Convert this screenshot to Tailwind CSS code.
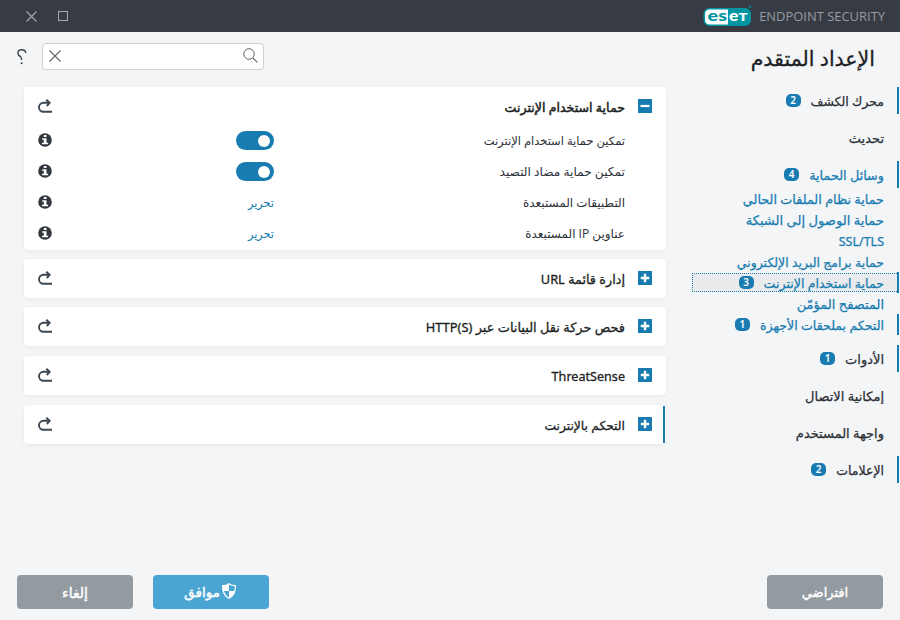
<!DOCTYPE html>
<html lang="ar" dir="rtl">
<head>
    <meta charset="UTF-8">
    <title>ESET Endpoint Security</title>
    <script src="https://cdn.jsdelivr.net/npm/@tailwindcss/browser@4"></script>
</head>
<body class="w-[900px] h-[620px] overflow-hidden bg-[#f4f5f7] text-[13px] text-[#2b2f36] font-['Noto_Sans','Open_Sans','DejaVu_Sans',sans-serif] flex flex-col whitespace-nowrap">

    <svg class="hidden">
        <symbol id="reset" viewBox="0 0 14 14">
            <path d="M14 12.800H5.500A4.500 4.500 0 0 1 5.500 3.800H10.500" fill="none" stroke="#3b4752" stroke-width="1.900"/>
            <path d="M8.300 .8L11.600 3.800L8.800 7" fill="none" stroke="#3b4752" stroke-width="2"/>
        </symbol>
        <symbol id="info" viewBox="0 0 14 14">
            <circle cx="7" cy="7" r="6.800" fill="#33383f"/>
            <path d="M5.800 2h2.700v2H5.800zM4.200 5.200h4.300v4.500h1.600v1.600H4V9.700h1.800V6.800H4.200z" fill="#fff"/>
        </symbol>
        <symbol id="plus" viewBox="0 0 14 14">
            <path d="M0 0h14v14H0z" fill="#187cb0"/>
            <path d="M2.800 7h8.400M7 2.800v8.400" stroke="#fff" stroke-width="2.400"/>
        </symbol>
        <symbol id="minus" viewBox="0 0 14 14">
            <path d="M0 0h14v14H0z" fill="#187cb0"/>
            <path d="M2.500 7h9" stroke="#fff" stroke-width="2.200"/>
        </symbol>
    </svg>

    <!-- Title bar -->
    <header class="h-8 shrink-0 bg-[#373b43] flex items-center justify-between pr-[15px] pl-[26px]" dir="ltr">
        <div class="flex items-center gap-[21px]">
            <svg class="w-[11px] h-[11px]" viewBox="0 0 11 11"><path d="M.5 .5l10 10M10.500 .5l-10 10" stroke="#aaa9a6" stroke-width="1.100"/></svg>
            <div class="w-[10px] h-[10px] border border-[#aaa9a6]"></div>
        </div>
        <div class="flex items-center gap-[7px]">
            <svg class="w-[49px] h-[22px]" viewBox="0 0 49 22">
                <rect x=".5" y="3" width="47.500" height="18" rx="6" fill="#0096a1"/>
                <path d="M7 4.500H25V19.500H7Q2 19.500 2 14.500V9.500Q2 4.500 7 4.500z" fill="#fff"/>
                <circle cx="47" cy="2" r="1.500" fill="#0c7480"/>
                <text x="4.500" y="16" font-size="15.500" font-weight="900" font-family="Lato" fill="#0096a1" textLength="19.500" lengthAdjust="spacingAndGlyphs">es</text>
                <text x="26" y="16" font-size="15.500" font-weight="900" font-family="Lato" fill="#fff" textLength="18.500" lengthAdjust="spacingAndGlyphs">eт</text>
            </svg>
            <span class="pt-[2px] text-[12.95px] text-[#969aa2] font-['Open_Sans']">ENDPOINT SECURITY</span>
        </div>
    </header>

    <div class="grow flex">
        <!-- Navigation -->
        <aside class="w-[209px] flex flex-col">
            <h1 class="h-[55px] pb-[2px] pr-[25px] flex items-center text-[20.5px] text-[#1c1f24] [-webkit-text-stroke:0.3px]"><span>الإعداد المتقدم</span></h1>
            <nav class="flex flex-col gap-[10px] pr-px">
                <a class="h-[27px] flex items-center gap-[10px] pr-[13px] border-r-2 border-[#187cb0]"><span class="pt-[4px] text-[12.5px] [-webkit-text-stroke:0.25px]">محرك الكشف</span><b class="w-[15px] h-[13px] rounded-[5px] bg-[#187cb0] text-white text-[10px] leading-[13px] text-center font-semibold">2</b></a>
                <a class="h-[27px] flex items-center pr-[15px]"><span class="pt-[2px] [-webkit-text-stroke:0.25px]">تحديث</span></a>
                <div class="text-[#187cb0] [-webkit-text-stroke:0.25px]">
                    <a class="h-[27px] flex items-center gap-[10px] pr-[13px] border-r-2 border-[#187cb0]"><span class="pt-[2px] text-[12.8px]">وسائل الحماية</span><b class="w-[15px] h-[13px] rounded-[5px] bg-[#187cb0] text-white text-[10px] leading-[13px] text-center font-semibold [-webkit-text-stroke:0px]">4</b></a>
                    <a class="h-[21px] flex items-center pr-[15px]"><span class="pt-[2px] text-[12.8px]">حماية نظام الملفات الحالي</span></a>
                    <a class="h-[21px] flex items-center pr-[15px]"><span class="pt-[2px] text-[13.1px]">حماية الوصول إلى الشبكة</span></a>
                    <a class="h-[21px] flex items-center pr-[15px]"><span class="pt-[4px] text-[12.5px]">SSL/TLS</span></a>
                    <a class="h-[21px] flex items-center pr-[15px]"><span class="pt-[4px] text-[12.5px]">حماية برامج البريد الإلكتروني</span></a>
                    <div class="h-[21px] border-r-2 border-[#187cb0] py-px">
                        <a class="h-[19px] ml-px flex items-center gap-[10px] pr-[13px] bg-[#e9ebed] border border-r-0 border-dotted border-[#187cb0]"><span class="pt-[4px] text-[12.6px]">حماية استخدام الإنترنت</span><b class="w-[15px] h-[13px] rounded-[5px] bg-[#187cb0] text-white text-[10px] leading-[13px] text-center font-semibold [-webkit-text-stroke:0px]">3</b></a>
                    </div>
                    <a class="h-[21px] flex items-center pr-[15px]"><span class="pt-[2px]">المتصفح المؤمّن</span></a>
                    <a class="h-[21px] flex items-center gap-[10px] pr-[13px] border-r-2 border-[#187cb0]"><span class="pt-[4px] text-[12.6px]">التحكم بملحقات الأجهزة</span><b class="w-[15px] h-[13px] rounded-[5px] bg-[#187cb0] text-white text-[10px] leading-[13px] text-center font-semibold [-webkit-text-stroke:0px]">1</b></a>
                </div>
                <a class="h-[27px] flex items-center gap-[10px] pr-[13px] border-r-2 border-[#187cb0]"><span class="pt-[2px] [-webkit-text-stroke:0.25px]">الأدوات</span><b class="w-[15px] h-[13px] rounded-[5px] bg-[#187cb0] text-white text-[10px] leading-[13px] text-center font-semibold">1</b></a>
                <a class="h-[27px] flex items-center pr-[15px]"><span class="pt-[2px] [-webkit-text-stroke:0.25px]">إمكانية الاتصال</span></a>
                <a class="h-[27px] flex items-center pr-[15px]"><span class="pt-[2px] [-webkit-text-stroke:0.25px]">واجهة المستخدم</span></a>
                <a class="h-[27px] flex items-center gap-[10px] pr-[13px] border-r-2 border-[#187cb0]"><span class="pt-[4px] text-[12.5px] [-webkit-text-stroke:0.25px]">الإعلامات</span><b class="w-[15px] h-[13px] rounded-[5px] bg-[#187cb0] text-white text-[10px] leading-[13px] text-center font-semibold">2</b></a>
            </nav>
        </aside>

        <!-- Settings -->
        <main class="grow pr-[25px] pl-6 pt-[11px]">
            <div class="flex items-center justify-end gap-[15px] -ml-[7px] h-[27px] mb-[17px]">
                <div class="w-[222px] h-[27px] bg-white border border-[#cfd0d2] rounded-[4px] flex items-center justify-between pr-[5px] pl-[6px] pb-[2px]">
                    <svg class="w-[15px] h-[15px]" viewBox="0 0 15 15"><circle cx="6" cy="6" r="5.300" fill="none" stroke="#666" stroke-width="1"/><path d="M10 10l4.300 4.300" stroke="#666" stroke-width="1.200"/></svg>
                    <svg class="w-[12px] h-[12px]" viewBox="0 0 12 12"><path d="M.5 .5l11 11M11.500 .5l-11 11" stroke="#666" stroke-width="1.100"/></svg>
                </div>
                <svg class="w-[10px] h-[16px]" viewBox="0 0 10 16"><path d="M1 5V3.500Q1 .8 4.500 .8Q8.800 .8 8.800 4" fill="none" stroke="#3b4752" stroke-width="1.400"/><path d="M1 4.500Q1 6.500 3.500 7.500Q4.600 8.200 4.600 11" fill="none" stroke="#3b4752" stroke-width="1.400"/><circle cx="4.600" cy="14.300" r="1" fill="#3b4752"/></svg>
            </div>

            <section class="h-[163px] bg-white rounded-[4px] shadow-[0_1px_4px_rgba(0,0,0,0.06)] mb-[9px] px-[14px]">
                <div class="h-[38px] flex items-center gap-[13px] text-[#1c1f24]"><svg class="w-[14px] h-[14px]"><use href="#minus"/></svg><span class="pt-[4px] text-[12.6px] [-webkit-text-stroke:0.5px]">حماية استخدام الإنترنت</span><svg class="w-[14px] h-[14px] mr-auto"><use href="#reset"/></svg></div>
                <div class="h-[31px] flex items-center pr-[27px] text-[11.5px]"><div class="w-[351px]"><span>تمكين حماية استخدام الإنترنت</span></div><i class="w-[38px] h-[19px] rounded-full bg-[#187cb0] flex items-center pr-[4px]"><i class="w-[12px] h-[12px] rounded-full bg-white"></i></i><svg class="w-[14px] h-[14px] mr-auto mb-[2px]"><use href="#info"/></svg></div>
                <div class="h-[31px] flex items-center pr-[27px] text-[12.2px]"><div class="w-[351px] pt-[2px]"><span>تمكين حماية مضاد التصيد</span></div><i class="w-[38px] h-[19px] rounded-full bg-[#187cb0] flex items-center pr-[4px]"><i class="w-[12px] h-[12px] rounded-full bg-white"></i></i><svg class="w-[14px] h-[14px] mr-auto mb-[2px]"><use href="#info"/></svg></div>
                <div class="h-[31px] flex items-center pr-[27px] text-[12px]"><div class="w-[351px]"><span>التطبيقات المستبعدة</span></div><a class="pt-[2px] text-[11.3px] text-[#187cb0]">تحرير</a><svg class="w-[14px] h-[14px] mr-auto mb-[2px]"><use href="#info"/></svg></div>
                <div class="h-[31px] flex items-center pr-[27px] text-[12px]"><div class="w-[351px]"><span>عناوين <bdi class="font-['Open_Sans']">IP</bdi> المستبعدة</span></div><a class="pt-[2px] text-[11.3px] text-[#187cb0]">تحرير</a><svg class="w-[14px] h-[14px] mr-auto mb-[2px]"><use href="#info"/></svg></div>
            </section>
            <section class="h-[39px] bg-white rounded-[4px] shadow-[0_1px_4px_rgba(0,0,0,0.06)] mb-[9px] px-[14px] flex items-center gap-[13px] text-[#1c1f24]"><svg class="w-[14px] h-[14px] mb-[2px]"><use href="#plus"/></svg><span class="pt-[2px] text-[12.8px] [-webkit-text-stroke:0.3px]">إدارة قائمة URL</span><svg class="w-[14px] h-[14px] mr-auto mb-[2px]"><use href="#reset"/></svg></section>
            <section class="h-[39px] bg-white rounded-[4px] shadow-[0_1px_4px_rgba(0,0,0,0.06)] mb-[10px] px-[14px] flex items-center gap-[13px] text-[#1c1f24]"><svg class="w-[14px] h-[14px] mb-[2px]"><use href="#plus"/></svg><span class="pt-[2px] text-[12.9px] [-webkit-text-stroke:0.3px]">فحص حركة نقل البيانات عبر <bdi>HTTP(S)</bdi></span><svg class="w-[14px] h-[14px] mr-auto mb-[2px]"><use href="#reset"/></svg></section>
            <section class="h-[39px] bg-white rounded-[4px] shadow-[0_1px_4px_rgba(0,0,0,0.06)] mb-[10px] px-[14px] flex items-center gap-[13px] text-[#1c1f24]"><svg class="w-[14px] h-[14px] mb-[2px]"><use href="#plus"/></svg><span class="pt-[4px] text-[12.6px] [-webkit-text-stroke:0.3px]">ThreatSense</span><svg class="w-[14px] h-[14px] mr-auto mb-[2px]"><use href="#reset"/></svg></section>
            <section class="h-[39px] bg-white rounded-[4px] shadow-[0_1px_4px_rgba(0,0,0,0.06)] pl-[14px] pr-px flex items-center gap-[13px] text-[#1c1f24]"><i class="w-[2px] h-[37px] bg-[#187cb0] -ml-[2px]"></i><svg class="w-[14px] h-[14px] mb-[2px]"><use href="#plus"/></svg><span class="pt-[4px] text-[12.3px] [-webkit-text-stroke:0.3px]">التحكم بالإنترنت</span><svg class="w-[14px] h-[14px] mr-auto mb-[2px]"><use href="#reset"/></svg></section>
        </main>
    </div>

    <!-- Buttons -->
    <footer class="h-[45px] shrink-0 px-[17px] flex gap-5 text-white text-[14px] [-webkit-text-stroke:0.4px]">
        <button class="w-[116px] h-[34px] rounded-[4px] bg-[#939aa0] text-[13px] pt-[2px]">افتراضي</button>
        <button class="w-[116px] h-[34px] rounded-[4px] bg-[#4ba5d3] mr-auto flex items-center justify-center gap-[2px] pr-[2px]"><svg class="w-[14px] h-[16px] mb-[2px]" viewBox="0 0 14 16"><path d="M7 .7Q9.500 2.700 13.300 2.700Q13.800 11.500 7 15.300Q.2 11.500 .7 2.700Q4.500 2.700 7 .7z" fill="#4ba5d3" stroke="#fff" stroke-width="1.200"/><path d="M7 .7V8H.9Q.4 5 .7 2.700Q4.500 2.700 7 .7zM7 8h6.200Q12 12.500 7 15.300z" fill="#fff"/></svg><span class="text-[13.6px]">موافق</span></button>
        <button class="w-[116px] h-[34px] rounded-[4px] bg-[#939aa0]">إلغاء</button>
    </footer>
</body>
</html>
